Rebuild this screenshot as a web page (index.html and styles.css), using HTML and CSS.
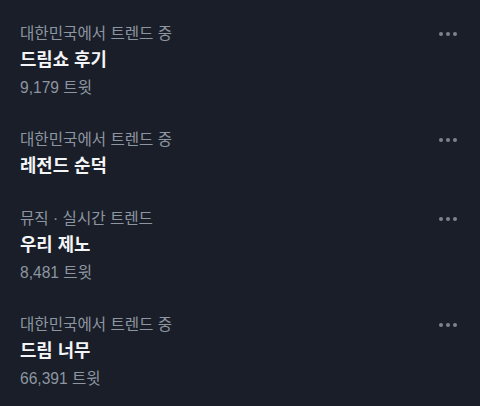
FILE: index.html
```html
<!DOCTYPE html>
<html lang="ko">
<head>
<meta charset="utf-8">
<link rel="stylesheet" href="styles.css">
</head>
<body>
<div class="list">
  <div class="trend">
    <div class="info">
      <div class="meta">대한민국에서 트렌드 중</div>
      <div class="title">드림쇼 후기</div>
      <div class="meta">9,179 트윗</div>
    </div>
    <div class="more"><span></span><span></span><span></span></div>
  </div>
  <div class="trend">
    <div class="info">
      <div class="meta">대한민국에서 트렌드 중</div>
      <div class="title">레전드 순덕</div>
    </div>
    <div class="more"><span></span><span></span><span></span></div>
  </div>
  <div class="trend">
    <div class="info">
      <div class="meta">뮤직 · 실시간 트렌드</div>
      <div class="title">우리 제노</div>
      <div class="meta">8,481 트윗</div>
    </div>
    <div class="more"><span></span><span></span><span></span></div>
  </div>
  <div class="trend">
    <div class="info">
      <div class="meta">대한민국에서 트렌드 중</div>
      <div class="title">드림 너무</div>
      <div class="meta">66,391 트윗</div>
    </div>
    <div class="more"><span></span><span></span><span></span></div>
  </div>
</div>
</body>
</html>
```
FILE: styles.css
```css
html, body {
  margin: 0;
  padding: 0;
  background: #191e28;
}
body {
  font-family: "Liberation Sans", "Noto Sans CJK KR", sans-serif;
  width: 480px;
  height: 406px;
  overflow: hidden;
}
.list {
  display: flex;
  flex-direction: column;
  padding-top: 8px;
}
.trend {
  display: flex;
  justify-content: space-between;
  align-items: flex-start;
  padding: 12px 20px 13px 20px;
}
.info {
  display: flex;
  flex-direction: column;
}
.meta {
  color: #8d95a1;
  font-size: 15.6px;
  line-height: 27px;
}
.title {
  color: #f4f5f7;
  font-size: 17.8px;
  font-weight: bold;
  line-height: 27px;
}
.more {
  display: flex;
  gap: 3px;
  padding-top: 12px;
  padding-right: 3px;
}
.more span {
  width: 4px;
  height: 4px;
  border-radius: 50%;
  background: #7b8391;
}
```
